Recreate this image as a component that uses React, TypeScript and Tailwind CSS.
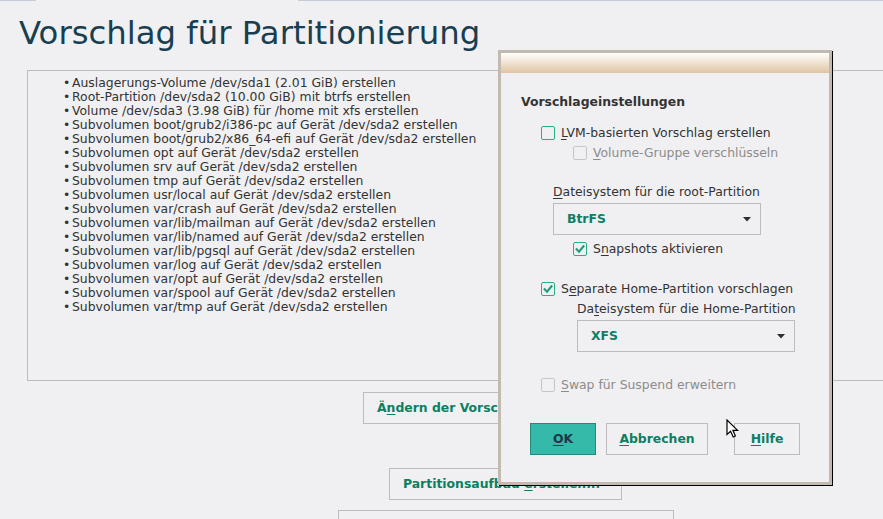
import React from "react";

const items = [
  "Auslagerungs-Volume /dev/sda1 (2.01 GiB) erstellen",
  "Root-Partition /dev/sda2 (10.00 GiB) mit btrfs erstellen",
  "Volume /dev/sda3 (3.98 GiB) für /home mit xfs erstellen",
  "Subvolumen boot/grub2/i386-pc auf Gerät /dev/sda2 erstellen",
  "Subvolumen boot/grub2/x86_64-efi auf Gerät /dev/sda2 erstellen",
  "Subvolumen opt auf Gerät /dev/sda2 erstellen",
  "Subvolumen srv auf Gerät /dev/sda2 erstellen",
  "Subvolumen tmp auf Gerät /dev/sda2 erstellen",
  "Subvolumen usr/local auf Gerät /dev/sda2 erstellen",
  "Subvolumen var/crash auf Gerät /dev/sda2 erstellen",
  "Subvolumen var/lib/mailman auf Gerät /dev/sda2 erstellen",
  "Subvolumen var/lib/named auf Gerät /dev/sda2 erstellen",
  "Subvolumen var/lib/pgsql auf Gerät /dev/sda2 erstellen",
  "Subvolumen var/log auf Gerät /dev/sda2 erstellen",
  "Subvolumen var/opt auf Gerät /dev/sda2 erstellen",
  "Subvolumen var/spool auf Gerät /dev/sda2 erstellen",
  "Subvolumen var/tmp auf Gerät /dev/sda2 erstellen",
];

function Check({ checked, disabled }: { checked?: boolean; disabled?: boolean }) {
  return (
    <span
      className={
        disabled
          ? "w-[14px] h-[14px] shrink-0 border border-[#c6c6c6] rounded-[2px] flex items-center justify-center"
          : "w-[14px] h-[14px] shrink-0 border border-[#26b089] rounded-[2px] flex items-center justify-center"
      }
    >
      {checked && (
        <svg width="10" height="10" viewBox="0 0 10 10">
          <path d="M1.6 5.2 L4 7.7 L8.5 2.3" stroke="#1e9f78" strokeWidth="2.1" fill="none" strokeLinecap="square" />
        </svg>
      )}
    </span>
  );
}

function Row({ children, checked, disabled, className }: { children: React.ReactNode; checked?: boolean; disabled?: boolean; className: string }) {
  return (
    <div className={className}>
      <Check checked={checked} disabled={disabled} />
      <span className={disabled ? "text-[#8c8c8c]" : "text-[#333333]"}>{children}</span>
    </div>
  );
}

function Arrow() {
  return (
    <svg width="8" height="5" viewBox="0 0 8 5">
      <path d="M0 0 L8 0 L4 4.5 Z" fill="#2e2e2e" />
    </svg>
  );
}

export default function App() {
  return (
    <div className="relative w-[883px] h-[519px] overflow-hidden bg-[#f0f0f2] font-['DejaVu_Sans',sans-serif]">
      <div className="flex h-px">
        <div className="w-[36px] bg-[#c6cbdc]" />
        <div className="w-[262px]" />
        <div className="flex-1 bg-[#c6cbdc]" />
      </div>
      <h1 className="pl-[19px] pt-[12px] text-[32.35px] leading-[40px] text-[#183e50] font-normal">
        Vorschlag für Partitionierung
      </h1>
      <div className="ml-[27px] w-[957px] mt-[17px] flex flex-col items-center">
        <div className="w-full h-[311px] border border-[#bcbcbc] pt-[4.5px] pl-[35px] text-[12.4px] leading-[14px] text-[#333333]">
          {items.map((t) => (
            <div key={t} className="flex whitespace-nowrap">
              <span className="w-[9px]">•</span>
              <span>{t}</span>
            </div>
          ))}
        </div>
        <div className="mt-[11px] w-[285px] h-[32px] border border-[#bcbcbc] flex items-center pl-[13px] text-[12.4px] font-bold text-[#0b7f62] whitespace-nowrap">
          <span>
            Ä<span className="underline underline-offset-2">n</span>dern der Vorschlagseinstellungen
          </span>
        </div>
        <div className="mt-[44px] w-[233px] h-[32px] border border-[#bcbcbc] flex items-center pl-[13px] text-[12.4px] font-bold text-[#0b7f62] whitespace-nowrap">
          <span>
            Partitionsaufbau <span className="underline underline-offset-2">e</span>rstellen...
          </span>
        </div>
        <div className="mt-[10px] w-[336px] h-[32px] border border-[#bcbcbc]" />
      </div>

      {/* Dialog */}
      <div className="absolute left-[498px] top-[50px] w-[334px] h-[435px] bg-[#c2bab0] p-[3px] shadow-[1px_1px_0_#000] flex flex-col">
        <div className="h-[20px] bg-linear-to-b from-white to-[#dfc4a2]" />
        <div className="flex-1 bg-[#f0f0f2] flex flex-col pl-[20px] text-[12.4px] text-[#333333] whitespace-nowrap">
          <div className="mt-[19px] h-[20px] leading-[20px] font-bold">Vorschlageinstellungen</div>
          <Row className="mt-[11px] ml-[20px] h-[20px] flex items-center gap-[6px]">
            <span className="underline underline-offset-2">L</span>VM-basierten Vorschlag erstellen
          </Row>
          <Row disabled className="ml-[52px] h-[20px] flex items-center gap-[6px]">
            <span className="underline underline-offset-2">V</span>olume-Gruppe verschlüsseln
          </Row>
          <div className="mt-[19px] ml-[32px] h-[20px] leading-[20px]">
            <span className="underline underline-offset-2">D</span>ateisystem für die root-Partition
          </div>
          <div className="mt-[1px] ml-[32px] w-[208px] h-[32px] border border-[#bcbcbc] flex items-center justify-between pl-[13px] pr-[9px]">
            <span className="font-bold text-[#0b7f62]">BtrFS</span>
            <Arrow />
          </div>
          <Row checked className="mt-[4px] ml-[52px] h-[20px] flex items-center gap-[6px]">
            S<span className="underline underline-offset-2">n</span>apshots aktivieren
          </Row>
          <Row checked className="mt-[20px] ml-[20px] h-[20px] flex items-center gap-[6px]">
            S<span className="underline underline-offset-2">e</span>parate Home-Partition vorschlagen
          </Row>
          <div className="ml-[56px] h-[20px] leading-[20px]">
            Da<span className="underline underline-offset-2">t</span>eisystem für die Home-Partition
          </div>
          <div className="mt-[1px] ml-[56px] w-[218px] h-[32px] border border-[#bcbcbc] flex items-center justify-between pl-[13px] pr-[9px]">
            <span className="font-bold text-[#0b7f62]">XFS</span>
            <Arrow />
          </div>
          <Row disabled className="mt-[23px] ml-[20px] h-[20px] flex items-center gap-[6px]">
            <span className="underline underline-offset-2">S</span>wap für Suspend erweitern
          </Row>
          <div className="mt-[28px] ml-[9px] flex font-bold">
            <div className="w-[66px] h-[32px] bg-[#35b9a9] border border-[#1e8c78] flex items-center justify-center text-[#1b3a48]">
              <span>
                <span className="underline underline-offset-2">O</span>K
              </span>
            </div>
            <div className="ml-[10px] w-[102px] h-[32px] border border-[#bcbcbc] flex items-center justify-center text-[#0b7f62]">
              <span>
                <span className="underline underline-offset-2">A</span>bbrechen
              </span>
            </div>
            <div className="ml-[26px] w-[66px] h-[32px] border border-[#bcbcbc] flex items-center justify-center text-[#0b7f62]">
              <span>
                <span className="underline underline-offset-2">H</span>ilfe
              </span>
            </div>
          </div>
        </div>
      </div>

      {/* Mouse cursor */}
      <svg className="absolute left-[726px] top-[419px]" width="14" height="20" viewBox="0 0 14 20">
        <path d="M1 1 L1 15.5 L4.6 12.2 L7.2 18 L9.4 17 L6.9 11.4 L11.6 11.4 Z" fill="#ffffff" stroke="#000000" strokeWidth="1.2" strokeLinejoin="miter" />
      </svg>
    </div>
  );
}
